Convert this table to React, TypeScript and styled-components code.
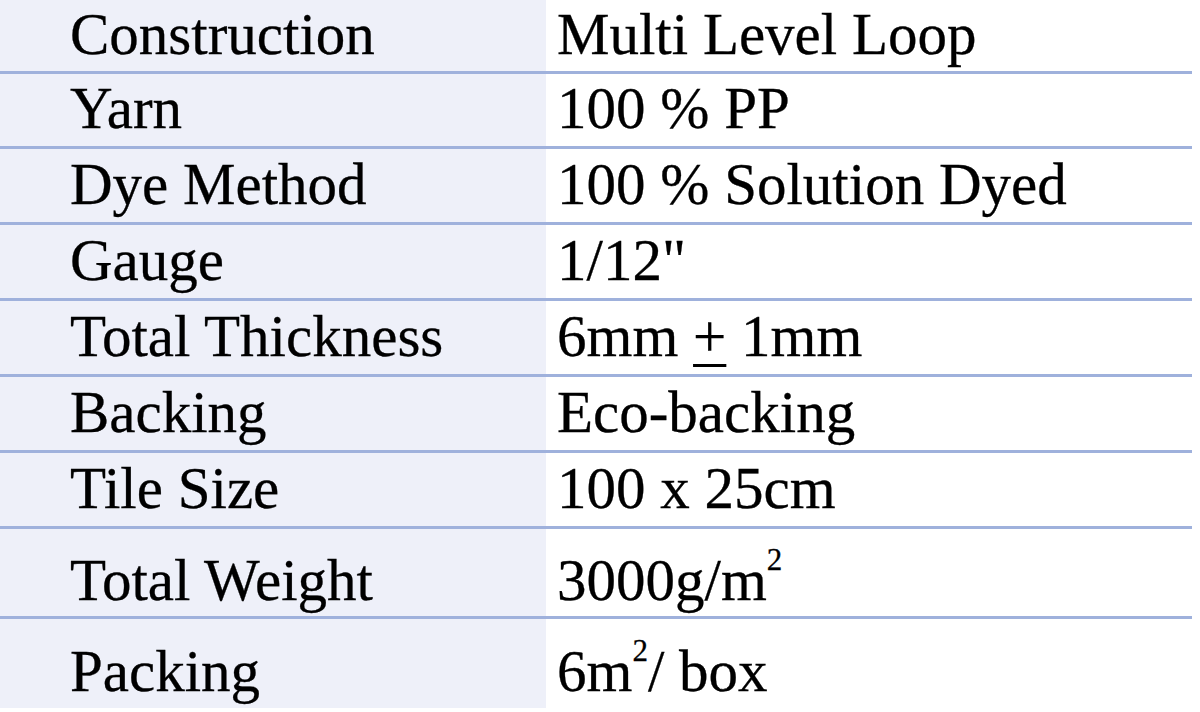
import React from "react";
import styled, { createGlobalStyle } from "styled-components";

const Global = createGlobalStyle`
  html, body { margin: 0; padding: 0; background: #ffffff; }
  body { width: 1200px; height: 712px; overflow: hidden; }
`;

const Table = styled.div`
  width: 1192px;
  display: flex;
  flex-direction: column;
  font-family: "Liberation Serif", "Times New Roman", serif;
  font-size: 59px;
  line-height: 66px;
  color: #000000;
`;

const Row = styled.div<{ $h: number; $last?: boolean }>`
  display: grid;
  grid-template-columns: 546px 1fr;
  height: ${(p) => p.$h}px;
  border-bottom: ${(p) => (p.$last ? "none" : "3px solid #9fb1dc")};
`;

const Cell = styled.div<{ $label?: boolean; $pb: number }>`
  display: flex;
  align-items: flex-end;
  padding: 0 0 ${(p) => p.$pb}px ${(p) => (p.$label ? 70 : 11)}px;
  background: ${(p) => (p.$label ? "#eef0f9" : "#ffffff")};
  white-space: nowrap;
  overflow: visible;
`;

const Text = styled.span`
  display: block;
  -webkit-text-stroke: 0.3px #000;
`;

const Sup = styled.span`
  font-size: 31px;
  vertical-align: 30px;
  line-height: 0;
`;

const PlusMinus = styled.span`
  text-decoration: underline;
  text-decoration-thickness: 3px;
  text-underline-offset: 8px;
`;

type Spec = { label: string; value: React.ReactNode; h: number; pb: number };

const rows: Spec[] = [
  { label: "Construction", value: "Multi Level Loop", h: 71, pb: 4 },
  { label: "Yarn", value: "100 % PP", h: 72, pb: 5 },
  { label: "Dye Method", value: "100 % Solution Dyed", h: 73, pb: 5 },
  { label: "Gauge", value: '1/12"', h: 73, pb: 5 },
  {
    label: "Total Thickness",
    value: (
      <>
        6mm <PlusMinus>+</PlusMinus> 1mm
      </>
    ),
    h: 73,
    pb: 5,
  },
  { label: "Backing", value: "Eco-backing", h: 73, pb: 5 },
  { label: "Tile Size", value: "100 x 25cm", h: 73, pb: 5 },
  {
    label: "Total Weight",
    value: (
      <>
        3000g/m<Sup>2</Sup>
      </>
    ),
    h: 87,
    pb: 3,
  },
  {
    label: "Packing",
    value: (
      <>
        6m<Sup>2</Sup>/ box
      </>
    ),
    h: 89,
    pb: 4,
  },
];

export default function App() {
  return (
    <>
      <Global />
      <Table>
        {rows.map((r, i) => (
          <Row key={r.label} $h={r.h} $last={i === rows.length - 1}>
            <Cell $label $pb={r.pb}>
              <Text>{r.label}</Text>
            </Cell>
            <Cell $pb={r.pb}>
              <Text>{r.value}</Text>
            </Cell>
          </Row>
        ))}
      </Table>
    </>
  );
}
